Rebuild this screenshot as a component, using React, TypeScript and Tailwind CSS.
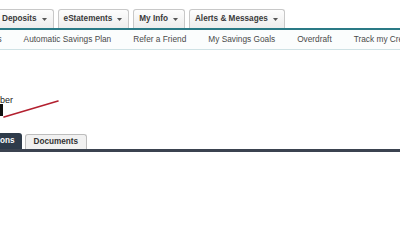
import React from "react";

const TOP_TABS = ["Deposits", "eStatements", "My Info", "Alerts & Messages"];

const SUB_NAV = [
  "Loans",
  "Automatic Savings Plan",
  "Refer a Friend",
  "My Savings Goals",
  "Overdraft",
  "Track my Credit",
];

function Caret() {
  return (
    <svg width="5" height="3" viewBox="0 0 5 3" className="ml-[5px] mt-[1px]">
      <path d="M0 0h5L2.5 3z" fill="#555" />
    </svg>
  );
}

export default function App() {
  return (
    <div
      className="relative h-[225px] w-[400px] overflow-hidden bg-white text-[#333]"
      style={{ fontFamily: '"Liberation Sans", Arial, sans-serif' }}
    >
      {/* main menu tabs */}
      <div className="mt-[9px] flex h-[19px] items-stretch gap-[4px] -ml-[4px]">
        {TOP_TABS.map((tab) => (
          <div
            key={tab}
            className="flex items-center whitespace-nowrap rounded-t-[3px] border border-b-0 border-[#c8c8c8] bg-gradient-to-b from-[#fdfdfd] to-[#ededed] pl-[5px] pr-[6px] text-[8.2px] font-bold text-[#3a3a3a]"
          >
            {tab}
            <Caret />
          </div>
        ))}
      </div>
      <div className="h-[2px] bg-[#2a7a86]" />

      {/* sub nav */}
      <div className="flex h-[20px] items-center gap-[22px] border-b border-[#cfe2e5] bg-[#fbfdfd] -ml-[21px] text-[8.3px] text-[#4a4a4a]">
        {SUB_NAV.map((item) => (
          <span key={item} className="whitespace-nowrap">
            {item}
          </span>
        ))}
      </div>

      {/* account field */}
      <div className="mt-[46px] -ml-[54px] whitespace-nowrap text-[9px] leading-[8px] text-[#222]">
        Account Number
      </div>
      <div className="h-[12px] w-[3px] bg-[#111]" />
      <svg className="absolute left-0 top-[98px]" width="62" height="22" viewBox="0 0 62 22">
        <path d="M4 19L58 3" stroke="#b3202f" strokeWidth="1.6" strokeLinecap="round" />
      </svg>

      {/* content tabs */}
      <div className="mt-[17px] flex h-[16px] items-stretch gap-[3px] -ml-[43px]">
        <div className="flex items-center whitespace-nowrap rounded-t-[3px] bg-[#2e3b4a] px-[7px] text-[8.2px] font-bold text-white">
          Transactions
        </div>
        <div className="mt-[1px] flex items-center rounded-t-[3px] border border-b-0 border-[#bdbdbd] bg-[#f1f1f1] px-[8px] text-[8.2px] font-bold text-[#333]">
          Documents
        </div>
      </div>
      <div className="h-[3px] bg-[#3b4350]" />
    </div>
  );
}
